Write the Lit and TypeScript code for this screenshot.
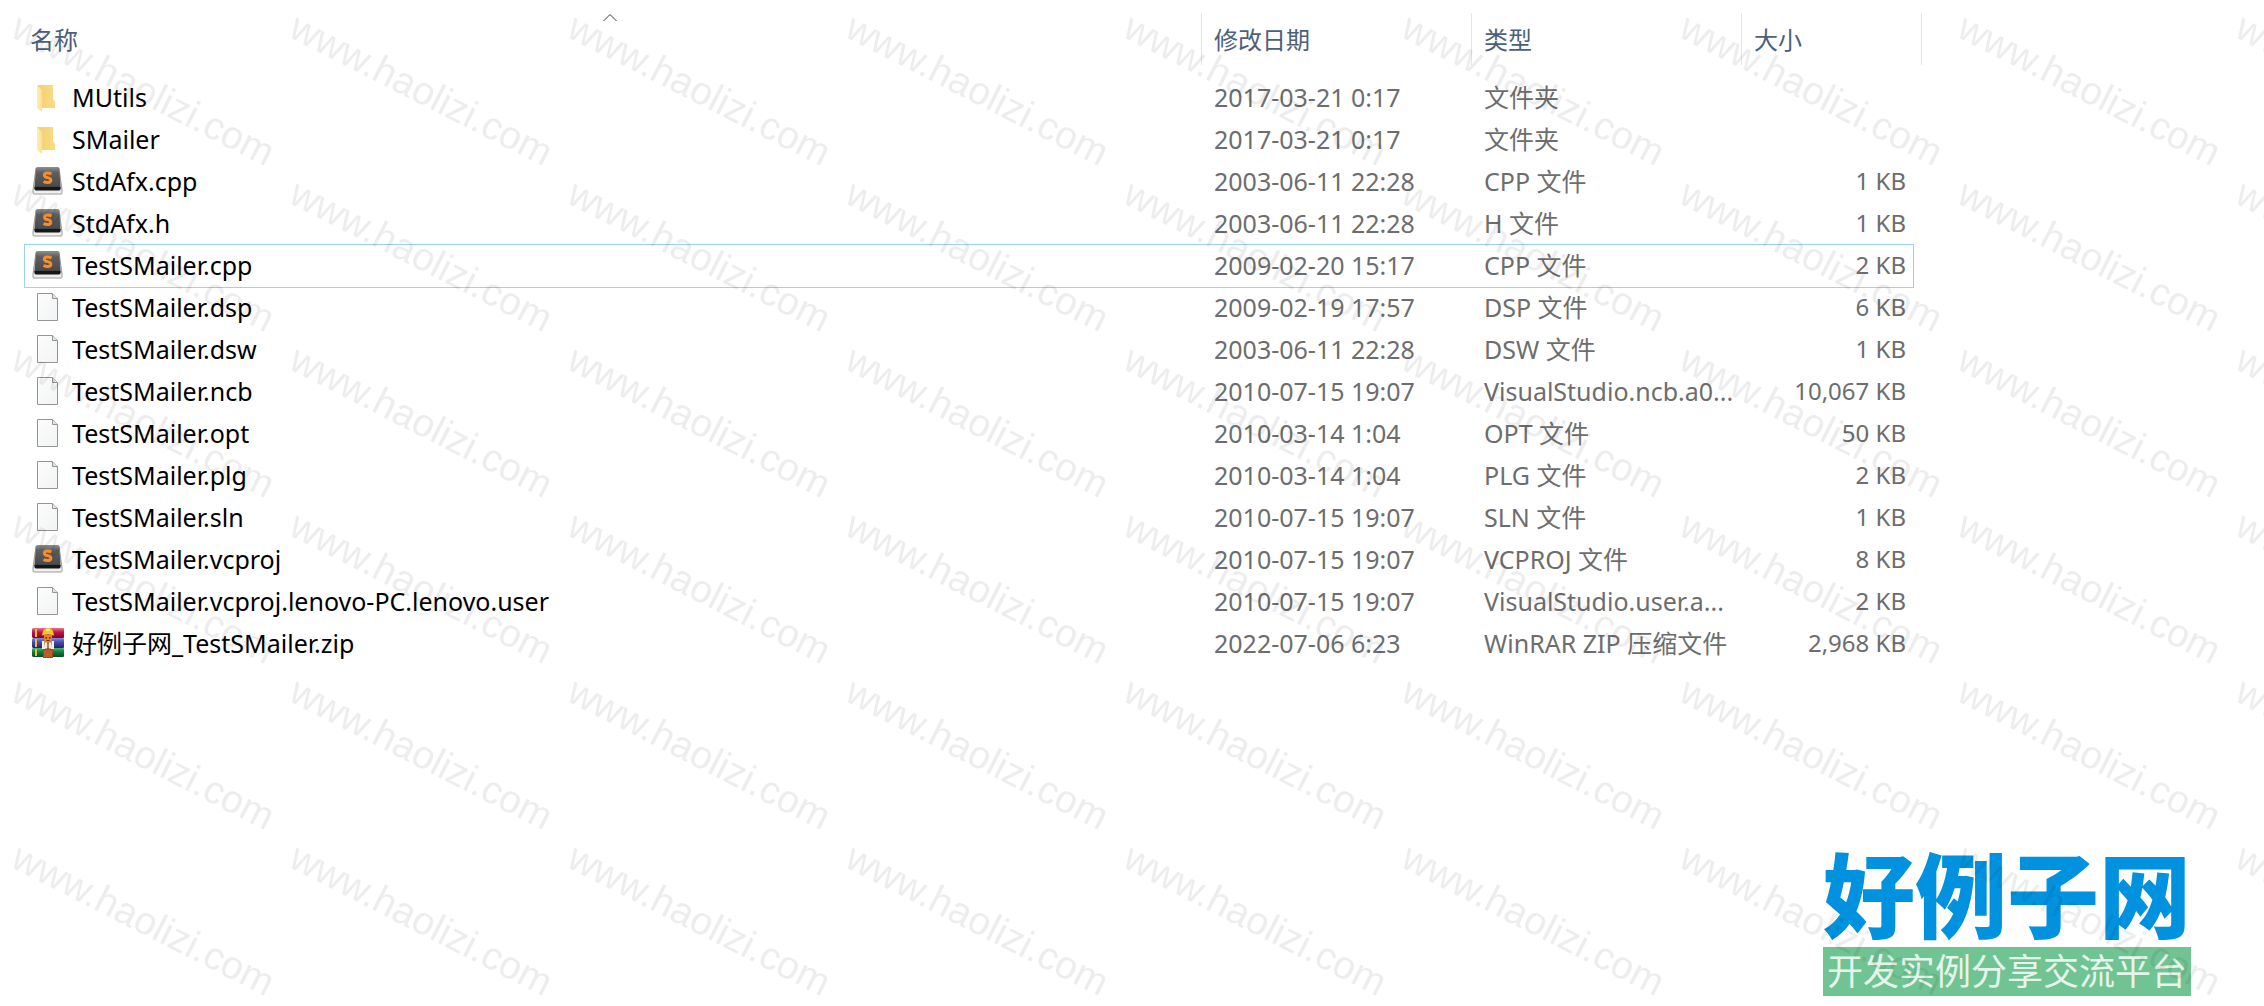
import { LitElement, html, css, svg } from "lit";
import { customElement } from "lit/decorators.js";

type Kind = "folder" | "sublime" | "file" | "rar";
interface Entry {
  kind: Kind;
  name: string;
  date: string;
  type: string;
  size: string;
  focused?: boolean;
}

const ENTRIES: Entry[] = [
  { kind: "folder", name: "MUtils", date: "2017-03-21 0:17", type: "文件夹", size: "" },
  { kind: "folder", name: "SMailer", date: "2017-03-21 0:17", type: "文件夹", size: "" },
  { kind: "sublime", name: "StdAfx.cpp", date: "2003-06-11 22:28", type: "CPP 文件", size: "1 KB" },
  { kind: "sublime", name: "StdAfx.h", date: "2003-06-11 22:28", type: "H 文件", size: "1 KB" },
  { kind: "sublime", name: "TestSMailer.cpp", date: "2009-02-20 15:17", type: "CPP 文件", size: "2 KB", focused: true },
  { kind: "file", name: "TestSMailer.dsp", date: "2009-02-19 17:57", type: "DSP 文件", size: "6 KB" },
  { kind: "file", name: "TestSMailer.dsw", date: "2003-06-11 22:28", type: "DSW 文件", size: "1 KB" },
  { kind: "file", name: "TestSMailer.ncb", date: "2010-07-15 19:07", type: "VisualStudio.ncb.a0...", size: "10,067 KB" },
  { kind: "file", name: "TestSMailer.opt", date: "2010-03-14 1:04", type: "OPT 文件", size: "50 KB" },
  { kind: "file", name: "TestSMailer.plg", date: "2010-03-14 1:04", type: "PLG 文件", size: "2 KB" },
  { kind: "file", name: "TestSMailer.sln", date: "2010-07-15 19:07", type: "SLN 文件", size: "1 KB" },
  { kind: "sublime", name: "TestSMailer.vcproj", date: "2010-07-15 19:07", type: "VCPROJ 文件", size: "8 KB" },
  { kind: "file", name: "TestSMailer.vcproj.lenovo-PC.lenovo.user", date: "2010-07-15 19:07", type: "VisualStudio.user.a...", size: "2 KB" },
  { kind: "rar", name: "好例子网_TestSMailer.zip", date: "2022-07-06 6:23", type: "WinRAR ZIP 压缩文件", size: "2,968 KB" },
];

const ICONS = {
  folder: svg`
    <defs>
      <linearGradient id="fb" x1="0" x2="1"><stop offset="0" stop-color="#f2cf6e"/><stop offset="1" stop-color="#fadb86"/></linearGradient>
      <linearGradient id="ff" x1="0" x2="1"><stop offset="0" stop-color="#ffeeb8"/><stop offset="1" stop-color="#fbdf93"/></linearGradient>
    </defs>
    <path d="M5 3H21V17L23 20V26H8Z" fill="url(#fb)"/>
    <path d="M5 3L10 8V30L5 26Z" fill="url(#ff)"/>`,
  sublime: svg`
    <defs>
      <linearGradient id="sk" x1="0" x2="0" y1="0" y2="1"><stop offset="0" stop-color="#8e8e8e"/><stop offset=".25" stop-color="#5e5e5e"/><stop offset=".8" stop-color="#4c4c4c"/><stop offset="1" stop-color="#2a2a2a"/></linearGradient>
      <linearGradient id="sb" x1="0" x2="0" y1="0" y2="1"><stop offset="0" stop-color="#a8a8a8"/><stop offset="1" stop-color="#f4f4f4"/></linearGradient>
    </defs>
    <path d="M4 2H27L30 24V27Q30 28 29 28H2Q1 28 1 27V24Z" fill="url(#sb)" stroke="#9a9a9a"/>
    <path d="M6 1H25.500Q27 1 27.300 3L28.500 21Q28.500 24 27 24H4Q2.500 24 2.500 21L4 3Q4.200 1 6 1Z" fill="url(#sk)"/>
    <path d="M2.500 21H28.500V22.500Q28.500 24.500 27 24.500H4Q2.500 24.500 2.500 22.500Z" fill="#161616"/>
    <path d="M19.500 7.800Q17 6.700 14.600 7Q12.300 7.400 12.400 9.300Q12.500 11 15.700 11.700Q19 12.500 18.900 14.500Q18.700 16.300 16 16.500Q13.500 16.600 11.500 15.500" fill="none" stroke="#f98d2b" stroke-width="2.900"/>`,
  file: svg`
    <defs><linearGradient id="pg" x1="0" x2="1" y1="0" y2="1"><stop offset="0" stop-color="#fdfdfd"/><stop offset="1" stop-color="#f1f3f4"/></linearGradient></defs>
    <path d="M5.500 1.500H20.500L25.500 6.500V28.500H5.500Z" fill="url(#pg)" stroke="#949494"/>
    <path d="M20.500 1.500V6.500H25.500" fill="#e4e4e4" stroke="#949494"/>`,
  rar: svg`
    <defs>
      <linearGradient id="r1" x1="0" x2="0" y1="0" y2="1"><stop offset="0" stop-color="#e07a96"/><stop offset=".4" stop-color="#c8143f"/><stop offset="1" stop-color="#6e0a26"/></linearGradient>
      <linearGradient id="r2" x1="0" x2="0" y1="0" y2="1"><stop offset="0" stop-color="#8a8cd8"/><stop offset=".4" stop-color="#4a4db0"/><stop offset="1" stop-color="#23245f"/></linearGradient>
      <linearGradient id="r3" x1="0" x2="0" y1="0" y2="1"><stop offset="0" stop-color="#4fb477"/><stop offset=".4" stop-color="#15803f"/><stop offset="1" stop-color="#084a22"/></linearGradient>
    </defs>
    <path d="M1 0H31Q32 0 32 1V9Q32 10 31 10H1L0 9V1Z" fill="url(#r1)"/>
    <path d="M1 10H31Q32 10 32 11V19Q32 20 31 20H1L0 19V11Z" fill="url(#r2)"/>
    <path d="M1 20H31Q32 20 32 21V28Q32 29 31 29H1L0 28V21Z" fill="url(#r3)"/>
    <path d="M3 1H5V9H3ZM3 11H5V19H3ZM3 21H5V28H3Z" fill="#f0bd31"/>
    <path d="M11 19H21V30H11Z" fill="#a3481c"/><path d="M12 22H20V29H12Z" fill="#b9602a"/>
    <path d="M10 13H13V21H10ZM19 13H22V21H19Z" fill="#f4f4f4"/>
    <path d="M12 7H20V14L19 20H13L12 14Z" fill="#dd8434"/>
    <path d="M13 14.500H15.500V20.500H13ZM16.500 14.500H19V20.500H16.500Z" fill="#f6efe8"/>
    <path d="M15.500 14H16.500V21H15.500Z" fill="#7c3714"/>
    <path d="M13.500 9H15V10.500H13.500ZM17 9H18.500V10.500H17ZM14.500 12H17.500V13H14.500Z" fill="#5a2a10"/>
    <path d="M10 7.500Q10.500 0 16 0Q21.500 0 22 7.500Q16 5.500 10 7.500Z" fill="#f8c62c"/>
    <path d="M14 1Q16 0 18 1L17.500 3H14.500Z" fill="#ffe680"/>`,
};

@customElement("app-root")
export class AppRoot extends LitElement {
  static styles = css`
    :host {
      display: block;
      position: relative;
      background: #fff;
      overflow: hidden;
      font-family: "Noto Sans", "Noto Sans CJK SC", sans-serif;
      font-size: 25px;
      line-height: 32px;
    }
    .page {
      box-sizing: border-box;
      min-height: 100vh;
      display: flex;
      flex-direction: column;
      padding: 13px 0 10px 25px;
    }
    .files {
      width: calc(100% - 351px);
      table-layout: fixed;
      border-collapse: separate;
      border-spacing: 0;
    }
    .c-date, .c-type { width: 270px; }
    .c-size { width: 171px; }
    th {
      position: relative;
      box-sizing: border-box;
      height: 64px;
      padding: 0;
      text-align: left;
      vertical-align: top;
      font-weight: 400;
    }
    .head {
      display: block;
      box-sizing: border-box;
      width: 100%;
      height: 52px;
      padding: 2px 0 0 12px;
      border: 0;
      border-right: 1px solid #e5e5e5;
      background: none;
      color: #4c607a;
      font: inherit;
      font-size: 24px;
      text-align: left;
    }
    .head.name { padding-left: 5px; }
    .head.size { width: calc(100% + 9px); }
    .caret {
      position: absolute;
      top: 0;
      left: calc(50% - 11px);
      display: block;
    }
    td {
      height: 40px;
      padding: 0 0 2px 12px;
      white-space: nowrap;
      overflow: hidden;
      color: #6d6d6d;
    }
    td.name { padding-left: 7px; color: #000; }
    td.size { padding: 0 7px 2px 0; font-size: 24px; text-align: right; }
    .focused { outline: 1px solid #99d1ff; }
    .label { display: flex; align-items: center; gap: 8px; }
    .icon { flex: none; display: block; }
    .brand {
      align-self: flex-end;
      margin: auto 73px 0 0;
      display: flex;
      flex-direction: column;
      align-items: center;
      text-decoration: none;
    }
    .brand-name {
      color: #0092de;
      font-family: "Noto Sans CJK SC", sans-serif;
      font-size: 92px;
      font-weight: 900;
      line-height: 112px;
    }
    .brand-line {
      padding: 0 4px 5px;
      background: #70c392;
      color: #e6f5ec;
      font-family: "Noto Sans CJK SC", sans-serif;
      font-size: 36px;
      line-height: 44px;
    }
    .watermark {
      position: absolute;
      inset: 0;
      width: 100%;
      height: 100%;
      pointer-events: none;
    }
    .mark { font-family: "Liberation Sans", sans-serif; font-size: 39px; fill: #000; fill-opacity: 0.07; }
  `;

  private icon(kind: Kind) {
    return html`<svg class="icon" width="32" height="32" viewBox="0 -1 32 32" aria-hidden="true">${ICONS[kind]}</svg>`;
  }

  private row(e: Entry) {
    return html`<tr class=${e.focused ? "focused" : ""}>
      <td class="name"><span class="label">${this.icon(e.kind)}<span>${e.name}</span></span></td>
      <td>${e.date}</td>
      <td>${e.type}</td>
      <td class="size">${e.size}</td>
    </tr>`;
  }

  render() {
    return html`
      <main class="page">
        <table class="files">
          <colgroup><col /><col class="c-date" /><col class="c-type" /><col class="c-size" /></colgroup>
          <thead>
            <tr>
              <th aria-sort="ascending">
                <button class="head name">名称</button>
                <svg class="caret" width="14" height="9" viewBox="0 0 14 9" aria-hidden="true"><path d="M.500 8L7 1.500L13.500 8" fill="none" stroke="#3c3c3c" /></svg>
              </th>
              <th><button class="head">修改日期</button></th>
              <th><button class="head">类型</button></th>
              <th><button class="head size">大小</button></th>
            </tr>
          </thead>
          <tbody>${ENTRIES.map((e) => this.row(e))}</tbody>
        </table>
        <a class="brand" href="#">
          <span class="brand-name">好例子网</span>
          <span class="brand-line">开发实例分享交流平台</span>
        </a>
      </main>
      <svg class="watermark" aria-hidden="true">
        <defs>
          <pattern id="tile" width="278" height="166" patternUnits="userSpaceOnUse">
            <text class="mark" transform="translate(9 36) rotate(27)">www.haolizi.com</text>
          </pattern>
        </defs>
        <rect width="100%" height="100%" fill="url(#tile)" />
      </svg>
    `;
  }
}
